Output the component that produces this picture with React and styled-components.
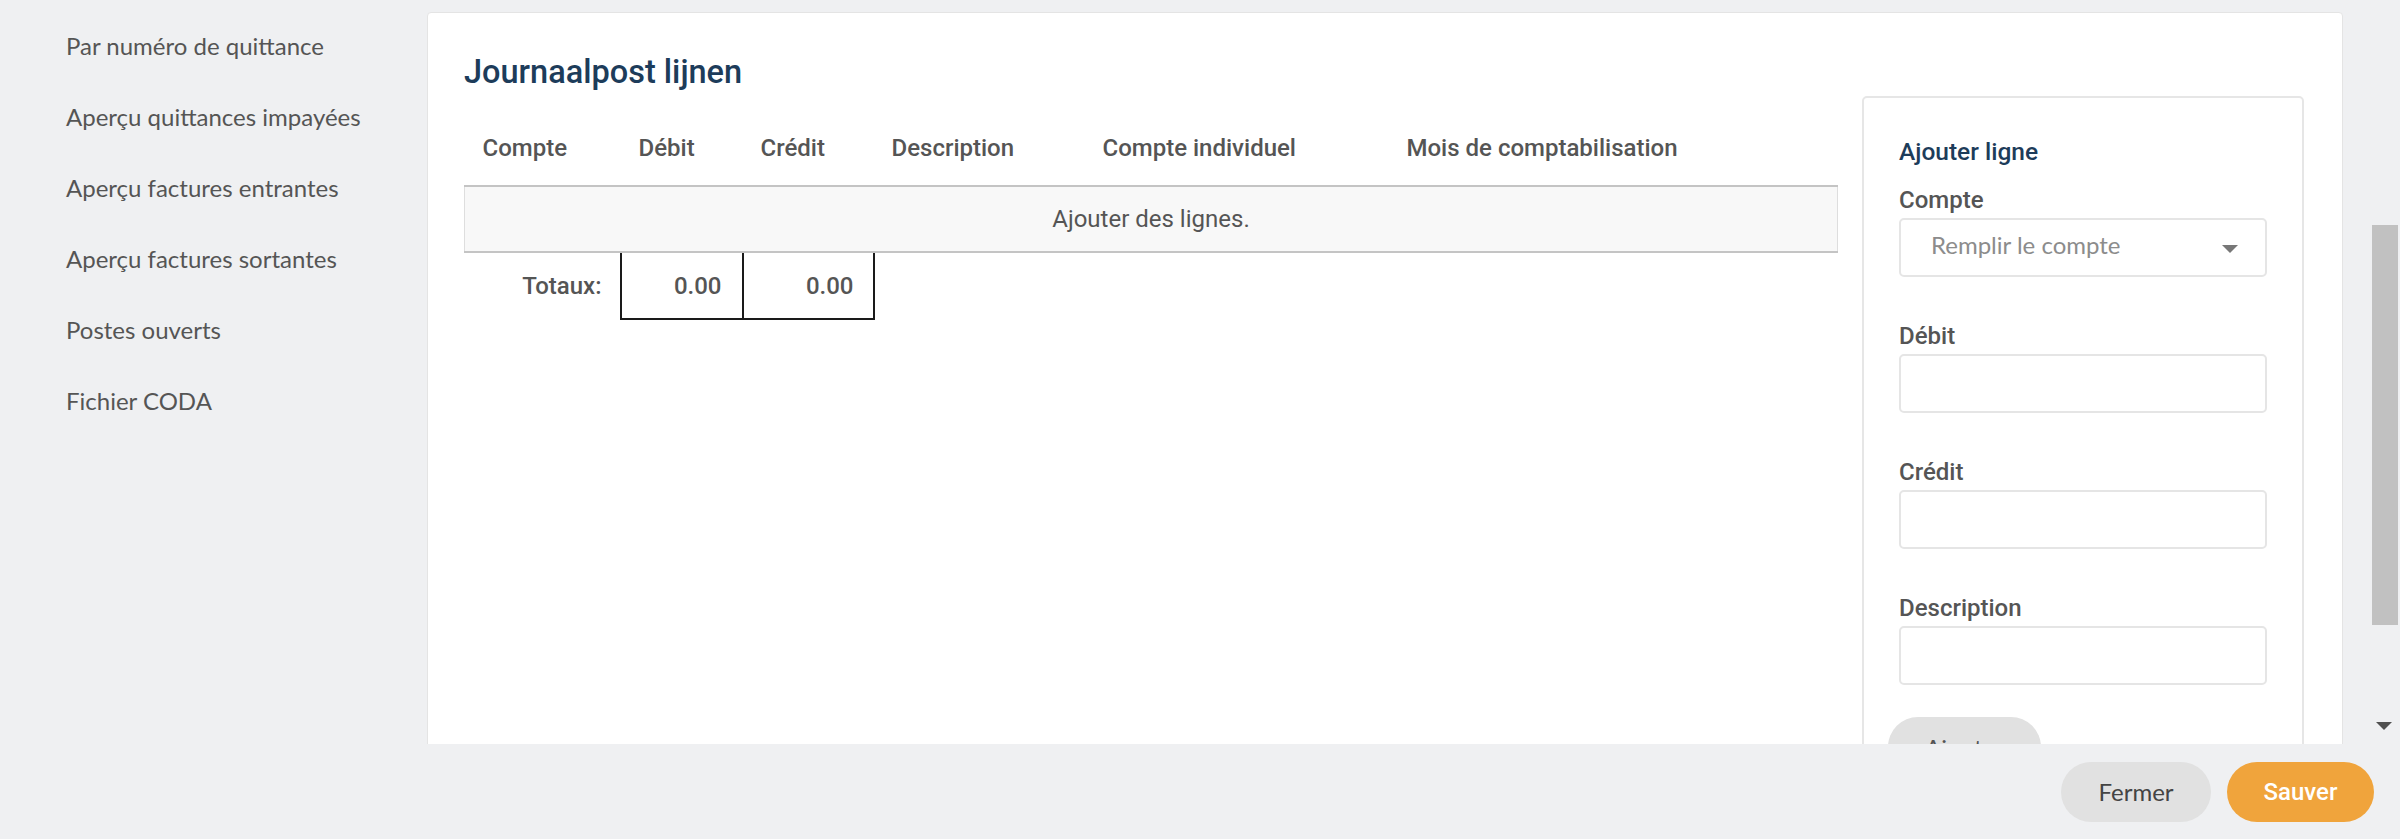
import React from "react";
import styled, { createGlobalStyle } from "styled-components";

const GlobalStyle = createGlobalStyle`
  html, body {
    margin: 0;
    padding: 0;
  }
  body {
    background: #eff0f2;
    font-family: Lato, "Open Sans", sans-serif;
    color: #555;
  }
`;

const Page = styled.div`
  width: 100vw;
  height: 839px;
  display: flex;
  flex-direction: column;
`;

const Body = styled.div`
  height: 744px;
  display: flex;
  overflow: hidden;
`;

const Sidebar = styled.nav`
  width: 427px;
  flex-shrink: 0;
  box-sizing: border-box;
  padding: 28px 0 0 66px;
  display: flex;
  flex-direction: column;
  gap: 35px;
`;

const NavItem = styled.a`
  font-size: 24px;
  line-height: 36px;
  color: #555;
  text-decoration: none;
`;

const Card = styled.section`
  flex: 1;
  align-self: flex-start;
  margin-top: 12px;
  background: #fff;
  border: 1px solid #e4e4e4;
  border-radius: 4px;
  padding: 39px 38px 40px 36px;
`;

const Title = styled.h2`
  margin: 0 0 4px;
  font-family: Roboto, sans-serif;
  font-weight: 500;
  font-size: 32.5px;
  line-height: 40px;
  color: #1d3c5a;
`;

const Content = styled.div`
  display: flex;
  align-items: flex-start;
  gap: 24px;
`;

const LinesColumn = styled.div`
  flex: 1;
`;

const Table = styled.table`
  width: 100%;
  border-collapse: collapse;
  table-layout: fixed;
  font-family: Roboto, sans-serif;
  font-size: 24px;
  color: #555;
`;

const Th = styled.th`
  text-align: left;
  font-weight: 500;
  line-height: 28px;
  padding: 38px 18px 23px;
  white-space: nowrap;
`;

const EmptyCell = styled.td`
  height: 64px;
  padding: 0;
  text-align: center;
  line-height: 28px;
  background: #f8f8f8;
  border-top: 2px solid #c4c4c4;
  border-bottom: 2px solid #c4c4c4;
  border-left: 1px solid #dedede;
  border-right: 1px solid #dedede;
`;

const TotalLabel = styled.td`
  height: 66px;
  padding: 0 18px 0 0;
  text-align: right;
  font-weight: 500;
`;

const TotalValue = styled.td`
  padding: 0 ${(p) => p.$pad || 20}px 0 0;
  text-align: right;
  font-weight: 500;
  border: 2px solid #1a1a1a;
`;

const AddPanel = styled.aside`
  width: 442px;
  flex-shrink: 0;
  box-sizing: border-box;
  border: 2px solid #e6e6e6;
  border-radius: 5px;
  padding: 40px 35px 60px;
`;

const PanelTitle = styled.h3`
  margin: 0 0 20px;
  font-family: Roboto, sans-serif;
  font-weight: 500;
  font-size: 24.5px;
  line-height: 28px;
  color: #1d3c5a;
`;

const FieldList = styled.div`
  display: flex;
  flex-direction: column;
  gap: 45px;
`;

const Field = styled.label`
  display: flex;
  flex-direction: column;
  gap: 4px;
`;

const Label = styled.span`
  font-family: Roboto, sans-serif;
  font-weight: 500;
  font-size: 24px;
  line-height: 28px;
  color: #555;
`;

const Input = styled.input`
  height: 59px;
  box-sizing: border-box;
  border: 2px solid #e5e5e5;
  border-radius: 5px;
  background: #fff;
  padding: 0 30px;
  font: 24px Lato, sans-serif;
  color: #555;
  outline: none;
`;

const SelectBox = styled.div`
  height: 59px;
  box-sizing: border-box;
  border: 2px solid #e5e5e5;
  border-radius: 5px;
  display: flex;
  align-items: center;
  justify-content: space-between;
  padding: 0 27px 6px 30px;
`;

const Placeholder = styled.span`
  font-size: 24px;
  color: #8c8c8c;
`;

const Caret = styled.span`
  width: 0;
  height: 0;
  border-left: 8px solid transparent;
  border-right: 8px solid transparent;
  border-top: 8px solid #777;
  margin-top: 8px;
`;

const PillButton = styled.button`
  height: 60px;
  width: ${(p) => p.$width}px;
  border: none;
  border-radius: 30px;
  padding: 0;
  font-family: ${(p) => (p.$primary ? "Roboto, sans-serif" : "Lato, sans-serif")};
  font-weight: ${(p) => (p.$primary ? 500 : 400)};
  font-size: 24px;
  background: ${(p) => (p.$primary ? "#f0a43c" : "#e1e1e1")};
  color: ${(p) => (p.$primary ? "#fff" : "#444")};
`;

const AddButton = styled(PillButton)`
  display: block;
  margin: 32px 0 0 -11px;
  color: #555;
`;

const ScrollRail = styled.div`
  width: 57px;
  flex-shrink: 0;
  display: flex;
  flex-direction: column;
  align-items: flex-end;
  padding-right: 2px;
  box-sizing: border-box;
`;

const Thumb = styled.div`
  width: 26px;
  height: 400px;
  margin-top: 225px;
  background: #c1c1c1;
`;

const ArrowDown = styled.div`
  margin: auto 6px 14px 0;
  width: 0;
  height: 0;
  border-left: 8px solid transparent;
  border-right: 8px solid transparent;
  border-top: 8px solid #505050;
`;

const Footer = styled.footer`
  flex: 1;
  display: flex;
  justify-content: flex-end;
  align-items: center;
  gap: 16px;
  padding-right: 26px;
`;

const navLinks = [
  "Par numéro de quittance",
  "Aperçu quittances impayées",
  "Aperçu factures entrantes",
  "Aperçu factures sortantes",
  "Postes ouverts",
  "Fichier CODA",
];

const columns = [
  { name: "Compte", width: 156 },
  { name: "Débit", width: 122 },
  { name: "Crédit", width: 131 },
  { name: "Description", width: 211 },
  { name: "Compte individuel", width: 304 },
  { name: "Mois de comptabilisation" },
];

const App = () => {
  return (
    <Page>
      <GlobalStyle />
      <Body>
        <Sidebar>
          {navLinks.map((link) => (
            <NavItem key={link}>{link}</NavItem>
          ))}
        </Sidebar>

        <Card>
          <Title>Journaalpost lijnen</Title>
          <Content>
            <LinesColumn>
              <Table>
                <colgroup>
                  {columns.map((col) => (
                    <col key={col.name} style={col.width ? { width: col.width } : undefined} />
                  ))}
                </colgroup>
                <thead>
                  <tr>
                    {columns.map((col) => (
                      <Th key={col.name}>{col.name}</Th>
                    ))}
                  </tr>
                </thead>
                <tbody>
                  <tr>
                    <EmptyCell colSpan={6}>Ajouter des lignes.</EmptyCell>
                  </tr>
                  <tr>
                    <TotalLabel>Totaux:</TotalLabel>
                    <TotalValue>0.00</TotalValue>
                    <TotalValue $pad={19}>0.00</TotalValue>
                    <td colSpan={3} />
                  </tr>
                </tbody>
              </Table>
            </LinesColumn>

            <AddPanel>
              <PanelTitle>Ajouter ligne</PanelTitle>
              <FieldList>
                <Field>
                  <Label>Compte</Label>
                  <SelectBox>
                    <Placeholder>Remplir le compte</Placeholder>
                    <Caret />
                  </SelectBox>
                </Field>
                <Field>
                  <Label>Débit</Label>
                  <Input />
                </Field>
                <Field>
                  <Label>Crédit</Label>
                  <Input />
                </Field>
                <Field>
                  <Label>Description</Label>
                  <Input />
                </Field>
              </FieldList>
              <AddButton $width={153}>Ajouter</AddButton>
            </AddPanel>
          </Content>
        </Card>

        <ScrollRail>
          <Thumb />
          <ArrowDown />
        </ScrollRail>
      </Body>

      <Footer>
        <PillButton $width={150}>Fermer</PillButton>
        <PillButton $width={147} $primary>
          Sauver
        </PillButton>
      </Footer>
    </Page>
  );
};

export default App;
